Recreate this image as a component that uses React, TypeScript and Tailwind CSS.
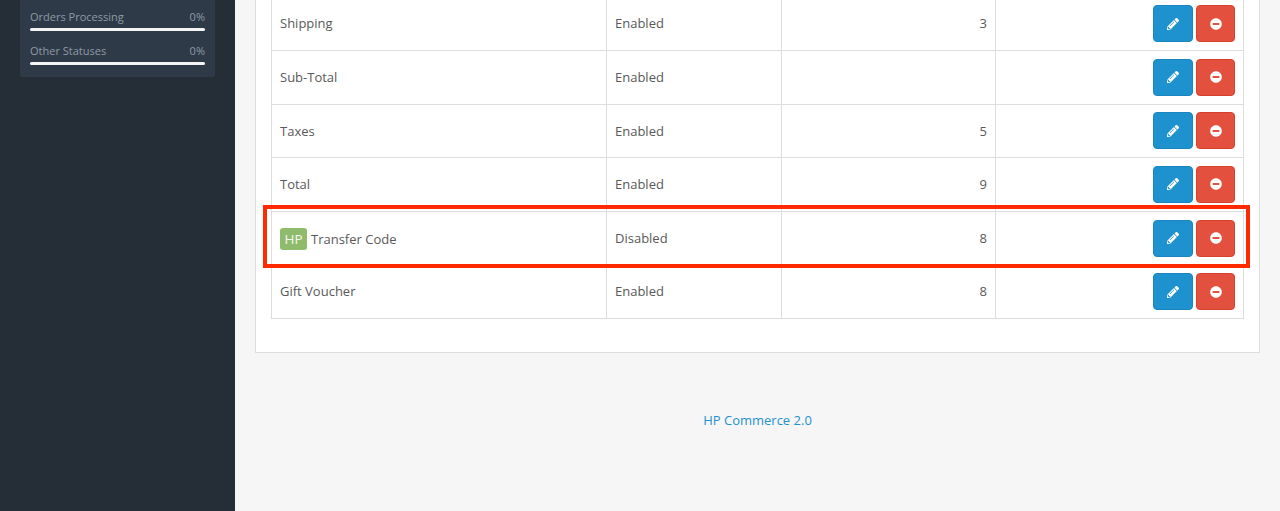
import { FaMinusCircle, FaPencilAlt } from "react-icons/fa";

const ROWS = [
  { name: "Shipping", status: "Enabled", order: "3" },
  { name: "Sub-Total", status: "Enabled", order: "" },
  { name: "Taxes", status: "Enabled", order: "5" },
  { name: "Total", status: "Enabled", order: "9" },
  { name: "Transfer Code", status: "Disabled", order: "8", badge: "HP" },
  { name: "Gift Voucher", status: "Enabled", order: "8" },
];

function Stat({ label }: { label: string }) {
  return (
    <div className="h-[34px] px-[10px]">
      <div className="flex justify-between text-[11px] leading-[15px] text-[#8f9aa6]">
        <span>{label}</span>
        <span>0%</span>
      </div>
      <div className="mt-[4px] h-[3px] rounded-full bg-[#f5f5f5]" />
    </div>
  );
}

export default function App() {
  return (
    <div className="flex h-[511px] overflow-hidden bg-[#f6f6f6] font-['Open_Sans',sans-serif] text-[13px] text-[#595959]">
      <aside className="w-[235px] shrink-0 bg-[#252d37] px-[20px]">
        <div className="h-[77px] rounded-b-[2px] bg-[#2e3a47] pt-[9px]">
          <Stat label="Orders Processing" />
          <Stat label="Other Statuses" />
        </div>
      </aside>

      <main className="relative min-w-0 flex-1 px-[20px]">
        <div className="-mt-[3.6px] h-[356.6px] rounded-[1px] border border-t-0 border-[#ddd] bg-white px-[15px]">
          <table className="w-[972px] table-fixed border-collapse">
            <colgroup>
              <col className="w-[335px]" />
              <col className="w-[175px]" />
              <col className="w-[214px]" />
              <col className="w-[248px]" />
            </colgroup>
            <tbody>
              {ROWS.map((row) => (
                <tr key={row.name} className="h-[53.6px]">
                  <td className="border border-[#ddd] px-[8px] pt-[0.9px] pb-0">
                    {row.badge && (
                      <span className="mr-[4px] inline-block h-[22px] w-[27px] rounded-[3px] bg-[#8fbb6c] text-center text-[13.5px] leading-[22px] text-[#f4f8f0]">
                        {row.badge}
                      </span>
                    )}
                    {row.name}
                  </td>
                  <td className="border border-[#ddd] px-[8px] pt-[0.9px] pb-0">{row.status}</td>
                  <td className="border border-[#ddd] px-[8px] pt-[0.9px] pb-0 text-right">{row.order}</td>
                  <td className="border border-[#ddd] px-[8px] py-0">
                    <div className="flex justify-end gap-[3px]">
                      <button className="flex h-[37px] w-[40px] items-center justify-center rounded-[4px] border border-[#1b85bf] bg-[#1e91cf] text-[12px] text-white">
                        <FaPencilAlt />
                      </button>
                      <button className="flex h-[37px] w-[39px] items-center justify-center rounded-[4px] border border-[#d6412e] bg-[#e3503e] text-[12px] text-white">
                        <FaMinusCircle />
                      </button>
                    </div>
                  </td>
                </tr>
              ))}
            </tbody>
          </table>
        </div>

        <footer className="mt-[58px] text-center text-[13px] leading-[18px] text-[#1e91cf]">
          HP Commerce 2.0
        </footer>

        <div className="absolute left-[28px] top-[205px] h-[63px] w-[987px] border-[4px] border-[#ff2a00]" />
      </main>
    </div>
  );
}
